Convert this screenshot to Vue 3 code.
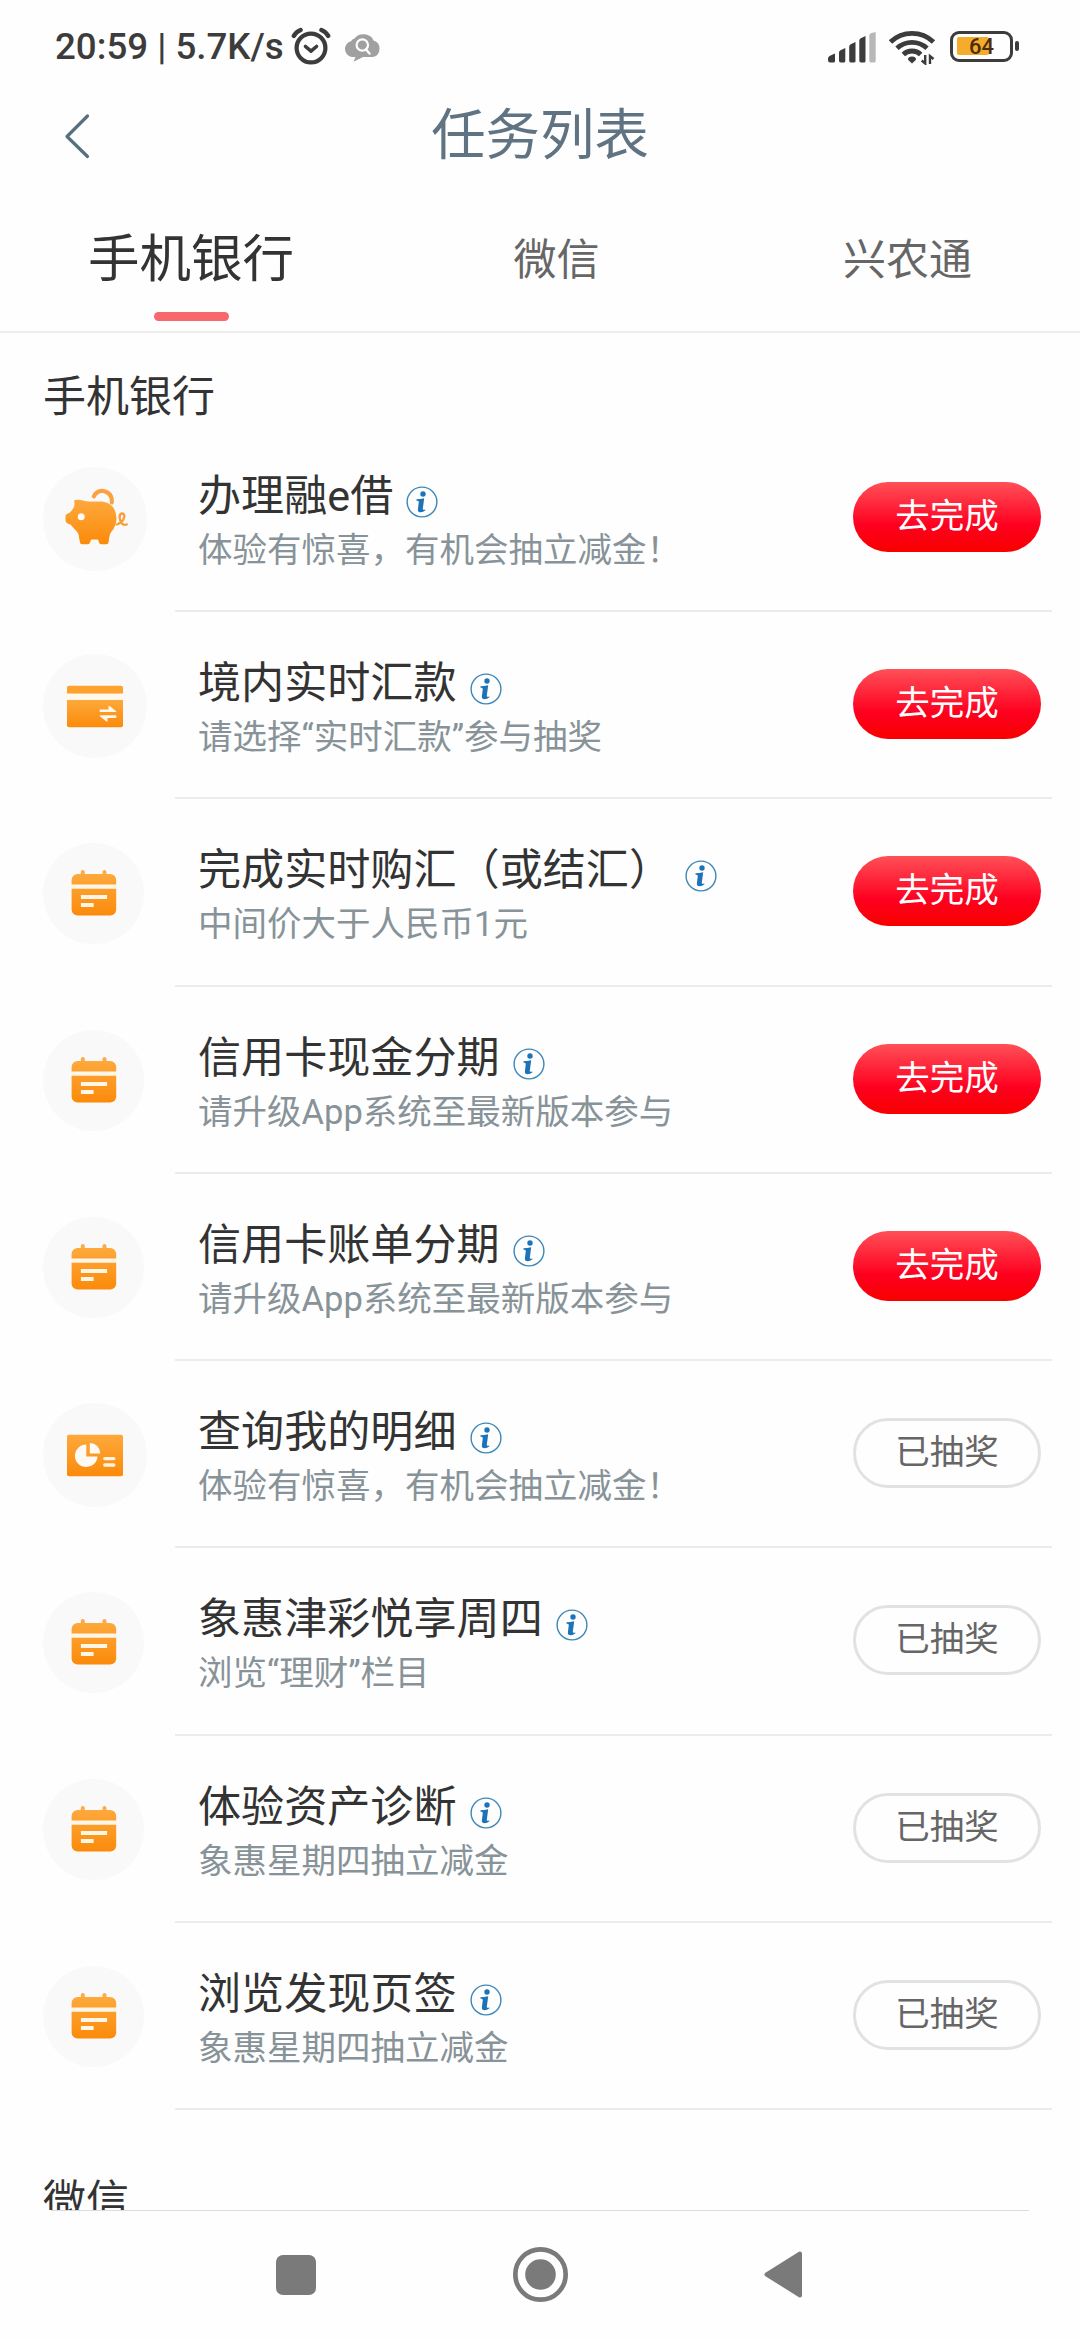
<script setup>
const tasks = [
  { icon: 'pig', title: '办理融e借', sub: '体验有惊喜，有机会抽立减金！', done: false },
  { icon: 'card', title: '境内实时汇款', sub: '请选择“实时汇款”参与抽奖', done: false },
  { icon: 'calendar', title: '完成实时购汇（或结汇）', sub: '中间价大于人民币1元', done: false },
  { icon: 'calendar', title: '信用卡现金分期', sub: '请升级App系统至最新版本参与', done: false },
  { icon: 'calendar', title: '信用卡账单分期', sub: '请升级App系统至最新版本参与', done: false },
  { icon: 'detail', title: '查询我的明细', sub: '体验有惊喜，有机会抽立减金！', done: true },
  { icon: 'calendar', title: '象惠津彩悦享周四', sub: '浏览“理财”栏目', done: true },
  { icon: 'calendar', title: '体验资产诊断', sub: '象惠星期四抽立减金', done: true },
  { icon: 'calendar', title: '浏览发现页签', sub: '象惠星期四抽立减金', done: true },
]
</script>

<template>
  <div class="screen">
    <svg class="defs" width="0" height="0" aria-hidden="true">
      <defs>
        <linearGradient id="orange" x1="0" y1="0" x2="0" y2="1">
          <stop offset="0" stop-color="#fda93c" />
          <stop offset="1" stop-color="#fb8a0a" />
        </linearGradient>
      </defs>
    </svg>

    <div class="status">
      <span class="clock">20:59 | 5.7K/s</span>
      <svg class="alarm" width="40" height="38" viewBox="0 0 40 38" fill="none" stroke="#3c3c3c">
        <circle cx="20" cy="21" r="14.4" stroke-width="4.2" />
        <path d="M14.5 19.5l5.500 4.700 5.500-4.700" stroke-width="3.600" stroke-linecap="round" stroke-linejoin="round" />
        <path d="M2.800 8.900Q5 4.800 9.600 3M37.200 8.900Q35 4.800 30.400 3" stroke-width="4.400" stroke-linecap="round" />
      </svg>
      <svg class="cloud" width="36" height="31" viewBox="0 0 36 31">
        <path d="M8 26a8 8 0 0 1-1-15.700A6 6 0 0 1 10.500 7.500 10.500 9 0 0 1 29.500 9.500 8.500 8.500 0 0 1 28.500 26H19L9.500 30.800 11.500 26z" fill="#a0a0a0" />
        <circle cx="18.300" cy="14" r="5.700" fill="none" stroke="#fff" stroke-width="2.200" />
        <path d="M22 18.500l3.500 4" stroke="#fff" stroke-width="2.400" stroke-linecap="round" />
      </svg>
      <span class="grow"></span>
      <svg class="signal" width="48" height="31" viewBox="0 0 48 31" fill="#3c3c3c">
        <path d="M0 28v-1.500q0-1.500 1.500-2.500L7 21.500v7.500q0 1.500-1.500 1.500H2q-2 0-2-2.500z" />
        <path d="M11 28.500v-8q0-1.500 1.500-2.200L17.300 16v13q0 1.500-1.500 1.500H12.500q-1.500 0-1.500-2z" />
        <path d="M21.200 28.500v-14q0-1.500 1.500-2.200L27.500 10v19q0 1.500-1.500 1.500h-3.300q-1.500 0-1.500-2z" />
        <path d="M31.300 28.500v-20q0-1.500 1.500-2.200L37.500 4v25q0 1.500-1.500 1.500h-3.200q-1.500 0-1.500-2z" />
        <path d="M41.300 28.500V3.500q0-1.500 1.500-2.200L47.700 0v29q0 1.500-1.500 1.500h-3.400q-1.500 0-1.500-2z" fill="#b8b8b8" />
      </svg>
      <svg class="wifi" width="47" height="35" viewBox="0 0 47 35" fill="none" stroke="#3c3c3c" stroke-width="4.800">
        <path d="M1.500 12A31 31 0 0 1 44.500 12" />
        <path d="M8 18.300A22 22 0 0 1 38 18.300" />
        <path d="M14.300 24.500A12.500 12.500 0 0 1 31.700 24.500" />
        <path d="M23 33.500l-4-3.700q0-3.300 4-3.300t4 3.300z" fill="#3c3c3c" stroke="none" />
        <path d="M36.200 25v8.500l-3.500-3M41 34v-8l3.500 3" stroke-width="2.400" />
      </svg>
      <div class="battery">
        <div class="shell"><i class="level"></i><b>64</b></div>
        <i class="tip"></i>
      </div>
    </div>

    <header class="bar">
      <svg class="back" width="26" height="46" viewBox="0 0 26 46" fill="none" stroke="#56707f" stroke-width="3.200" stroke-linecap="round" stroke-linejoin="round">
        <path d="M23.500 3L3 23.500 23.500 43.500" />
      </svg>
      <h1>任务列表</h1>
      <span class="side"></span>
    </header>

    <nav class="tabs">
      <div class="tab active"><span>手机银行</span><i></i></div>
      <div class="tab wechat"><span>微信</span></div>
      <div class="tab rural"><span>兴农通</span></div>
    </nav>

    <main>
      <h2>手机银行</h2>
      <section v-for="item in tasks" :key="item.title" class="row">
        <div class="pic">
          <svg v-if="item.icon === 'pig'" width="104" height="104" viewBox="0 0 104 104">
            <circle cx="52" cy="52" r="52" fill="#f9f9fa" />
            <path d="M50.800 29.500Q54 23 60.500 24Q69.500 26 68.800 35.500" fill="none" stroke="#fca040" stroke-width="4" stroke-linecap="round" />
            <path d="M31 33.500q4-1.500 9 0 3 1 6 1h13Q73 36.500 73.500 51q0 8-5 13.500-2 2.500-2.300 6l-.7 5q-.3 1.800-2 1.800h-5.500q-1.500 0-2-1.800l-.5-2q-.5-1-1.500-1h-5q-1 0-1.300 1l-.7 2q-.5 1.800-2 1.800h-6q-1.700 0-2-1.800l-1-5.500Q36 66 31.500 62q-2-2-4-4.500-4.500-1-5-4v-4.700q.5-2 4-3 2-1.500 3.800-4.500 2-3 .7-7.800z" fill="url(#orange)" />
            <circle cx="38.200" cy="49.700" r="3.500" fill="#fffaf3" />
            <path d="M74 57.500q6.500-3 7.300-7.800 .2-3.200-2.300-3.200-2.800.5-2.300 4 .5 5 2.800 6.500 2 1.300 4.300.5" fill="none" stroke="#fb9d36" stroke-width="2.300" stroke-linecap="round" />
          </svg>
          <svg v-else-if="item.icon === 'card'" width="104" height="104" viewBox="0 0 104 104">
            <circle cx="52" cy="52" r="52" fill="#f9f9fa" />
            <path d="M26 31.700h52q2 0 2 2V39.800H24V33.700q0-2 2-2z" fill="#fca22d" />
            <path d="M24 45.700h56V71.300q0 2-2 2H26q-2 0-2-2z" fill="url(#orange)" />
            <path d="M24 39.800h56v5.900H24z" fill="#fff8ec" />
            <path d="M57.500 55.500h8v-3.200q0-1 1-.4l6.500 5q1 1.200-.8 1.200H57.500q-1 0-1-1.300t1-1.300zM72.500 61.300q1 0 1 1.300t-1 1.300h-8v3.200q0 1-1 .4l-6.500-5q-1-1.200.8-1.200z" fill="#fff8ec" />
          </svg>
          <svg v-else-if="item.icon === 'detail'" width="104" height="104" viewBox="0 0 104 104">
            <circle cx="52" cy="52" r="52" fill="#f9f9fa" />
            <rect x="24" y="31.700" width="56" height="41.600" rx="2" fill="url(#orange)" />
            <path d="M43.300 41.500V53.500H54.500A11.300 11.300 0 1 1 43.300 41.500z" fill="#fffaf3" />
            <path d="M46.800 40A10.500 10.500 0 0 1 57.300 50.500H46.800z" fill="#fffaf3" />
            <path d="M61.800 55.600h9M61.800 62h9" stroke="#fff3df" stroke-width="3.400" stroke-linecap="round" />
          </svg>
          <svg v-else class="cal" width="101" height="101" viewBox="0 0 101 101">
            <circle cx="50.500" cy="50.500" r="50.500" fill="#f9f9fa" />
            <path d="M39.800 29V34M61.500 29V34" stroke="#fcaa4a" stroke-width="4" stroke-linecap="round" />
            <rect x="28.600" y="31" width="44.600" height="41.600" rx="6" fill="url(#orange)" />
            <path d="M28 41.500h46v4.200H28z" fill="#fff6e8" />
            <path d="M40 54h22M40 62h8.500" stroke="#fff6e8" stroke-width="4.200" stroke-linecap="square" />
          </svg>
        </div>
        <div class="body">
          <div class="texts">
            <div class="title">
              <span>{{ item.title }}</span>
              <svg class="info" width="32" height="32" viewBox="0 0 32 32">
                <circle cx="16" cy="16" r="14.900" fill="none" stroke="#3d87b8" stroke-width="1.400" />
                <circle cx="17" cy="8" r="2.700" fill="#1d73b8" />
                <path d="M10.500 13.200q3.500-.2 7.700-1l-1.400 10.600q-.1 1.500 2.400.6l.3.900q-2.500 1.900-4.800 2-3.200-.1-2.800-3l.9-7.400q.1-1.300-2.400-1.500z" fill="#1d73b8" />
              </svg>
            </div>
            <p>{{ item.sub }}</p>
          </div>
          <button :class="['pill', { done: item.done }]">{{ item.done ? '已抽奖' : '去完成' }}</button>
        </div>
      </section>
      <h2 class="next">微信</h2>
    </main>

    <footer class="sysnav">
      <svg width="40" height="40" viewBox="0 0 40 40"><rect width="40" height="40" rx="7" fill="#7a7a7a" /></svg>
      <svg width="55" height="55" viewBox="0 0 54 54">
        <circle cx="27" cy="27" r="24.700" fill="none" stroke="#7a7a7a" stroke-width="4.600" />
        <circle cx="27" cy="27" r="15" fill="#7a7a7a" />
      </svg>
      <svg width="38" height="47" viewBox="0 0 38 47"><path d="M2.500 23.500L36 2.500v42z" fill="#7a7a7a" stroke="#7a7a7a" stroke-width="4" stroke-linejoin="round" /></svg>
    </footer>
  </div>
</template>

<style>
body {
  background: #fefefe;
}
</style>

<style scoped>
.screen {
  width: 1080px;
  height: 2340px;
  overflow: hidden;
  display: flex;
  flex-direction: column;
  background: #fefefe;
  font-family: Roboto, "Noto Sans CJK SC", sans-serif;
  color: #333;
}
.defs {
  position: absolute;
}
svg {
  display: block;
  flex: none;
}
h1, h2, p {
  margin: 0;
  font-weight: 400;
}
.status {
  height: 94px;
  flex: none;
  display: flex;
  align-items: center;
  padding: 0 61px 0 55px;
}
.clock {
  width: 236px;
  font-size: 36.700px;
  font-weight: 500;
  line-height: 44px;
  color: #3c3c3c;
  white-space: nowrap;
}
.alarm {
  margin-top: -2px;
}
.cloud {
  margin: -2px 0 0 13px;
}
.grow {
  flex: 1;
}
.wifi {
  margin-left: 13px;
}
.battery {
  display: flex;
  align-items: center;
  margin: -2px 0 0 14px;
}
.shell {
  position: relative;
  box-sizing: border-box;
  width: 63px;
  height: 31px;
  border: 3px solid #3c3c3c;
  border-radius: 9px;
  display: flex;
  align-items: center;
  justify-content: center;
}
.level {
  position: absolute;
  left: 4px;
  top: 3.500px;
  width: 32px;
  height: 18px;
  border-radius: 2px;
  background: #f5ab2c;
}
.shell b {
  position: relative;
  font-size: 22px;
  line-height: 25px;
  font-weight: 500;
  color: #4a2d0c;
}
.tip {
  width: 4px;
  height: 10px;
  margin-left: 2px;
  border-radius: 2px;
  background: #3c3c3c;
}
.bar {
  height: 84px;
  flex: none;
  display: flex;
  align-items: center;
  justify-content: space-between;
  padding: 0 64px;
}
.bar .side {
  width: 26px;
}
h1 {
  font-size: 54.400px;
  line-height: 80px;
  color: #607382;
}
.tabs {
  box-sizing: border-box;
  height: 155px;
  flex: none;
  display: flex;
  justify-content: space-between;
  padding: 0 108px 0 88px;
  border-bottom: 2px solid #ededed;
}
.tab {
  padding-top: 44px;
  display: flex;
  flex-direction: column;
  align-items: center;
  font-size: 43px;
  line-height: 76px;
  color: #666;
}
.tab.active {
  font-size: 51.500px;
  color: #333;
}
.tab.wechat {
  margin-left: -24px;
}
.tab i {
  width: 75px;
  height: 9px;
  margin: 14px 0 0 1px;
  border-radius: 5px;
  background: #f7686c;
}
main {
  height: 1877px;
  flex: none;
  overflow: hidden;
}
h2 {
  padding: 33px 0 0 43px;
  height: 58.750px;
  font-size: 43px;
  line-height: 62px;
}
.row {
  height: 187.250px;
  display: flex;
}
.pic {
  width: 132px;
  padding: 42px 0 0 43px;
  box-sizing: border-box;
  flex: none;
}
.cal {
  margin-top: 1.500px;
}
.body {
  flex: 1;
  display: flex;
  justify-content: space-between;
  align-items: flex-start;
  margin: 0 28px 0 43px;
  padding: 0 11px 0 23px;
  border-bottom: 2px solid #ececec;
}
.title {
  display: flex;
  align-items: flex-start;
  margin-top: 41px;
  font-size: 43.100px;
  line-height: 62px;
  height: 62px;
  white-space: nowrap;
}
.info {
  margin: 20px 0 0 13px;
}
p {
  margin-top: -2px;
  font-size: 34.500px;
  line-height: 48px;
  color: #879398;
  white-space: nowrap;
}
.pill {
  width: 188px;
  height: 70px;
  margin: 57px 0 0;
  padding: 0 0 2px;
  flex: none;
  border: 0;
  border-radius: 35px;
  background: linear-gradient(#ff5058, #fe001f 62%, #f80000);
  color: #fff;
  font: 34.500px/60px Roboto, "Noto Sans CJK SC", sans-serif;
}
.pill.done {
  border: 3px solid #e2e2e2;
  background: #fefefe;
  color: #666;
}
.next {
  padding-top: 60px;
}
.sysnav {
  flex: 1;
  display: flex;
  align-items: center;
  justify-content: space-between;
  margin: 0 51px;
  padding: 0 227px 2px 225px;
  border-top: 1px solid #dcdcdc;
}
</style>
